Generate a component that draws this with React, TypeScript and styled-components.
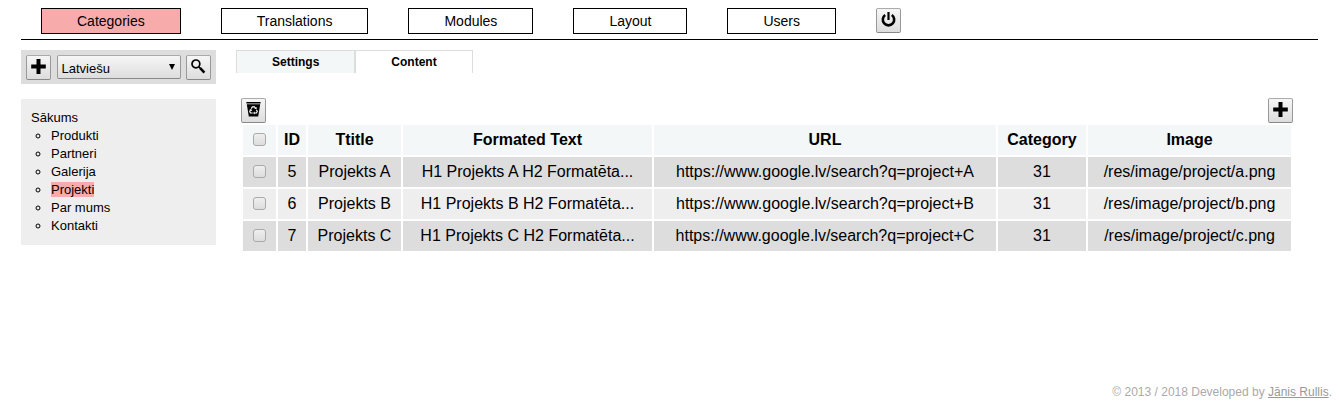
import React, { useState } from 'react';
import styled, { createGlobalStyle } from 'styled-components';

const GlobalStyle = createGlobalStyle`
  *, *::before, *::after { box-sizing: border-box; }
  body {
    margin: 0;
    background: #fff;
    color: #000;
    font: 16px/18px "Liberation Sans", Arial, sans-serif;
  }
`;

const Page = styled.div`
  display: flex;
  flex-direction: column;
  min-height: 100vh;
`;

const Header = styled.header`
  margin: 0 21px;
  padding: 8px 20px 5px;
  border-bottom: 1px solid #000;
`;

const Nav = styled.nav`
  display: flex;
  align-items: flex-start;
  gap: 40px;
`;

const NavLink = styled.a<{ $active?: boolean }>`
  padding: 0 35px;
  border: 1px solid #000;
  background: ${(p) => (p.$active ? '#f8abab' : '#fff')};
  color: #000;
  font-size: 14px;
  line-height: 24px;
  text-decoration: none;
`;

const IconButton = styled.button`
  display: flex;
  flex: none;
  align-items: center;
  justify-content: center;
  width: 25px;
  height: 25px;
  margin: 0;
  padding: 0 0 3px;
  border: 1px solid #999;
  border-color: #aaa #999 #888 #999;
  border-radius: 2px;
  background: linear-gradient(#f6f6f6, #ddd);
  color: #000;
  cursor: pointer;
`;

const Body = styled.div`
  display: flex;
  align-items: flex-start;
  gap: 20px;
  margin: 10px 21px 0;
`;

const Sidebar = styled.aside`
  display: flex;
  flex: none;
  flex-direction: column;
  gap: 15px;
  width: 195px;
`;

const SidebarTools = styled.div`
  display: flex;
  justify-content: space-between;
  height: 34px;
  padding: 5px;
  background: #ddd;
`;

const SelectBox = styled.label`
  position: relative;
  width: 124px;
  height: 24px;
`;

const Select = styled.select`
  appearance: none;
  display: block;
  width: 100%;
  height: 100%;
  margin: 0;
  padding: 3px 20px 0 4px;
  border: 1px solid #999;
  border-color: #aaa #999 #888 #999;
  border-radius: 2px;
  background: linear-gradient(#f6f6f6, #ddd);
  color: #000;
  font: 13px "Liberation Sans", Arial, sans-serif;
`;

const SelectArrow = styled.svg`
  position: absolute;
  top: 9px;
  right: 6px;
  pointer-events: none;
`;

const Tree = styled.nav`
  padding: 10px;
  background: #eee;
  font-size: 13px;
`;

const TreeList = styled.ul`
  margin: 0;
  padding: 0 0 0 20px;
  list-style: circle;
`;

const TreeLink = styled.a<{ $active?: boolean }>`
  background: ${(p) => (p.$active ? '#f8abab' : 'transparent')};
  color: #000;
  text-decoration: none;
`;

const Main = styled.main`
  flex: 1;
  min-width: 0;
`;

const Tabs = styled.div`
  display: flex;
`;

const Tab = styled.button<{ $active?: boolean }>`
  height: 23px;
  margin: 0;
  padding: 0 35px;
  border: 1px solid #ddd;
  border-bottom: 0;
  background: ${(p) => (p.$active ? '#fff' : '#f3f7f8')};
  color: #000;
  font: bold 12px "Liberation Sans", Arial, sans-serif;
  cursor: pointer;
`;

const Panel = styled.section`
  padding: 25px 25px 0 5px;
`;

const PanelTools = styled.div`
  display: flex;
  justify-content: space-between;
`;

const Table = styled.table`
  width: 100%;
  table-layout: fixed;
  border-collapse: separate;
  border-spacing: 2px;
`;

const Col = styled.col<{ $width: number }>`
  width: ${(p) => p.$width}px;
`;

const HeadRow = styled.tr`
  background: #f3f7f8;
`;

const Row = styled.tr`
  background: #eee;
  &:nth-child(odd) { background: #ddd; }
`;

const HeadCell = styled.th`
  height: 30px;
  padding: 0;
  font-weight: bold;
  text-align: center;
`;

const Cell = styled.td`
  height: 30px;
  padding: 0;
  text-align: center;
`;

const Check = styled.input`
  appearance: none;
  display: block;
  width: 13px;
  height: 13px;
  margin: 0 auto 1px;
  border: 1px solid #aaa;
  border-radius: 3px;
  background: linear-gradient(#eee, #ddd);
  &:checked { background: #777; }
`;

const Footer = styled.footer`
  margin-top: auto;
  padding: 0 7px 6px;
  color: #aaa;
  font-size: 12px;
  text-align: right;
`;

const FooterLink = styled.a`
  color: #999;
`;

const PlusIcon = () => (
  <svg width="15" height="15" viewBox="0 0 15 15" aria-hidden="true">
    <path d="M5.500 0h4v5.500h5.300v4H9.500V15h-4V9.500H.2v-4h5.300z" fill="#000" />
  </svg>
);

const SearchIcon = () => (
  <svg width="15" height="15" viewBox="0 0 15 15" fill="none" stroke="#000" aria-hidden="true">
    <circle cx="4.900" cy="4.900" r="3.900" strokeWidth="1.700" />
    <path d="M7.600 7.600l2 2" strokeWidth="1.600" />
    <path d="M9.200 9.200l4.200 4.400" strokeWidth="2.600" />
  </svg>
);

const PowerIcon = () => (
  <svg width="15" height="15" viewBox="0 0 15 15" fill="none" stroke="#000" aria-hidden="true">
    <path d="M4.200 3a5.700 5.700 0 1 0 6.600 0" strokeWidth="2.600" />
    <path d="M7.500 0v8" strokeWidth="2.200" />
  </svg>
);

const BinIcon = () => (
  <svg width="15" height="15" viewBox="0 0 15 15" aria-hidden="true">
    <path d="M.4 0h14.200v1.400H.4zM.8 2.200h13.400L12.200 14.600H2.800z" fill="#000" />
    <g fill="none" stroke="#fff" strokeWidth="1.200">
      <path d="M5.300 6.600L6.400 4.800h2.100l1 1.600" />
      <path d="M10.300 7.700l1 1.800-.9 1.500H8.300" />
      <path d="M6.700 11H4.500l-.8-1.500 1-1.700" />
    </g>
    <path d="M8.300 6.800l2.300.3.200-2.200zM8.700 9.500v3L7 11zM3.300 7.600l2.200-.4.700 2z" fill="#fff" />
  </svg>
);

const NAV = ['Categories', 'Translations', 'Modules', 'Layout', 'Users'];
const TREE = ['Produkti', 'Partneri', 'Galerija', 'Projekti', 'Par mums', 'Kontakti'];
const TABS = ['Settings', 'Content'];
const HEADS = ['ID', 'Ttitle', 'Formated Text', 'URL', 'Category', 'Image'];
const COLS = [33, 28, 93, 249, 342, 88, 203];
const ROWS = [
  { id: 5, letter: 'A' },
  { id: 6, letter: 'B' },
  { id: 7, letter: 'C' },
].map(({ id, letter }) => ({
  id,
  title: `Projekts ${letter}`,
  text: `H1 Projekts ${letter} H2 Formatēta...`,
  url: `https://www.google.lv/search?q=project+${letter}`,
  category: 31,
  image: `/res/image/project/${letter.toLowerCase()}.png`,
}));

export default function App() {
  const [selected, setSelected] = useState<number[]>([]);
  const [tab, setTab] = useState('Content');
  const all = selected.length === ROWS.length;
  const toggle = (id: number) =>
    setSelected((s) => (s.includes(id) ? s.filter((x) => x !== id) : [...s, id]));

  return (
    <Page>
      <GlobalStyle />
      <Header>
        <Nav aria-label="Main">
          {NAV.map((name) => (
            <NavLink key={name} href="#" $active={name === 'Categories'}>{name}</NavLink>
          ))}
          <IconButton type="button" aria-label="Log out"><PowerIcon /></IconButton>
        </Nav>
      </Header>
      <Body>
        <Sidebar>
          <SidebarTools>
            <IconButton type="button" aria-label="Add category"><PlusIcon /></IconButton>
            <SelectBox>
              <Select aria-label="Language" defaultValue="lv">
                <option value="lv">Latviešu</option>
              </Select>
              <SelectArrow width="6" height="6" viewBox="0 0 6 6" aria-hidden="true">
                <path d="M0 0h6L3 6z" fill="#000" />
              </SelectArrow>
            </SelectBox>
            <IconButton type="button" aria-label="Search"><SearchIcon /></IconButton>
          </SidebarTools>
          <Tree aria-label="Categories">
            <TreeLink href="#">Sākums</TreeLink>
            <TreeList>
              {TREE.map((name) => (
                <li key={name}>
                  <TreeLink href="#" $active={name === 'Projekti'}>{name}</TreeLink>
                </li>
              ))}
            </TreeList>
          </Tree>
        </Sidebar>
        <Main>
          <Tabs role="tablist">
            {TABS.map((name) => (
              <Tab
                key={name}
                type="button"
                role="tab"
                aria-selected={name === tab}
                $active={name === tab}
                onClick={() => setTab(name)}
              >
                {name}
              </Tab>
            ))}
          </Tabs>
          <Panel>
            <PanelTools>
              <IconButton type="button" aria-label="Delete selected"><BinIcon /></IconButton>
              <IconButton type="button" aria-label="Add row"><PlusIcon /></IconButton>
            </PanelTools>
            <Table>
              <colgroup>
                {COLS.map((width, i) => <Col key={i} $width={width} />)}
              </colgroup>
              <thead>
                <HeadRow>
                  <HeadCell>
                    <Check
                      type="checkbox"
                      aria-label="Select all"
                      checked={all}
                      onChange={() => setSelected(all ? [] : ROWS.map((r) => r.id))}
                    />
                  </HeadCell>
                  {HEADS.map((name) => <HeadCell key={name} scope="col">{name}</HeadCell>)}
                </HeadRow>
              </thead>
              <tbody>
                {ROWS.map((row) => (
                  <Row key={row.id}>
                    <Cell>
                      <Check
                        type="checkbox"
                        aria-label={`Select ${row.title}`}
                        checked={selected.includes(row.id)}
                        onChange={() => toggle(row.id)}
                      />
                    </Cell>
                    <Cell>{row.id}</Cell>
                    <Cell>{row.title}</Cell>
                    <Cell>{row.text}</Cell>
                    <Cell>{row.url}</Cell>
                    <Cell>{row.category}</Cell>
                    <Cell>{row.image}</Cell>
                  </Row>
                ))}
              </tbody>
            </Table>
          </Panel>
        </Main>
      </Body>
      <Footer>
        © 2013 / 2018 Developed by <FooterLink href="#">Jānis Rullis</FooterLink>.
      </Footer>
    </Page>
  );
}
